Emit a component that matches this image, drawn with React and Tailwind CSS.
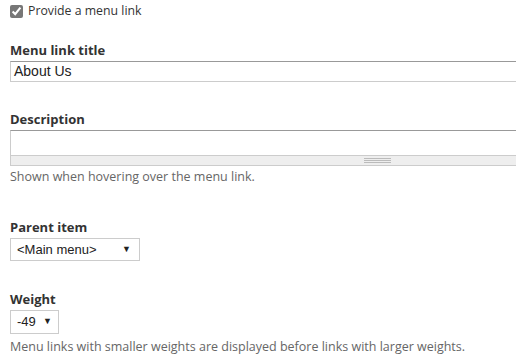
import React from 'react';

const label = "block text-[13px] font-bold text-[#333] leading-[16px]";
const help = "text-[12.5px] text-[#666] leading-[16px]";

const App = () => {
  return (
    <div className="w-[516px] h-[355px] overflow-hidden bg-white font-['Open_Sans',sans-serif]">
      <div className="w-[760px] pl-[10px] pt-[3px]">
        <label className="flex items-center gap-[5px] text-[12.3px] text-[#333] leading-[16px]">
          <input type="checkbox" defaultChecked className="w-[13px] h-[13px] m-0 accent-[#777]" />
          <span>Provide a menu link</span>
        </label>

        <div className="mt-[23px]">
          <span className={label}>Menu link title</span>
          <div className="mt-[3px] w-[734px] h-[21px] border border-[#ccc] border-t-[#999] flex items-center px-[3px] font-['Liberation_Sans',Arial,sans-serif] text-[14px] text-[#222]">
            About Us
          </div>
        </div>

        <div className="mt-[29px]">
          <span className={label}>Description</span>
          <div className="mt-[3px] w-[734px] border border-[#ccc] border-t-[#999]">
            <div className="h-[24px]" />
            <div className="h-[10px] bg-[#eee] border-t border-[#ccc] flex justify-center items-center">
              <div className="w-[27px] flex flex-col gap-[1px]">
                <div className="h-px bg-[#bbb]" />
                <div className="h-px bg-[#bbb]" />
                <div className="h-px bg-[#bbb]" />
              </div>
            </div>
          </div>
          <p className={`${help} mt-[3px]`}>Shown when hovering over the menu link.</p>
        </div>

        <div className="mt-[34px]">
          <span className={label}>Parent item</span>
          <div className="mt-[3px] w-[130px] h-[23px] border border-[#ccc] flex items-center justify-between pl-[6px] pr-[8px] font-['Liberation_Sans',Arial,sans-serif] text-[13px] text-[#222]">
            <span>&lt;Main menu&gt;</span>
            <span className="text-[9px]">▼</span>
          </div>
        </div>

        <div className="mt-[30px]">
          <span className={label}>Weight</span>
          <div className="mt-[3px] w-[49px] h-[24px] border border-[#ccc] flex items-center justify-between pl-[6px] pr-[6px] font-['Liberation_Sans',Arial,sans-serif] text-[13px] text-[#222]">
            <span>-49</span>
            <span className="text-[9px]">▼</span>
          </div>
          <p className={`${help} mt-[5px]`}>Menu links with smaller weights are displayed before links with larger weights.</p>
        </div>
      </div>
    </div>
  );
};

export default App;
